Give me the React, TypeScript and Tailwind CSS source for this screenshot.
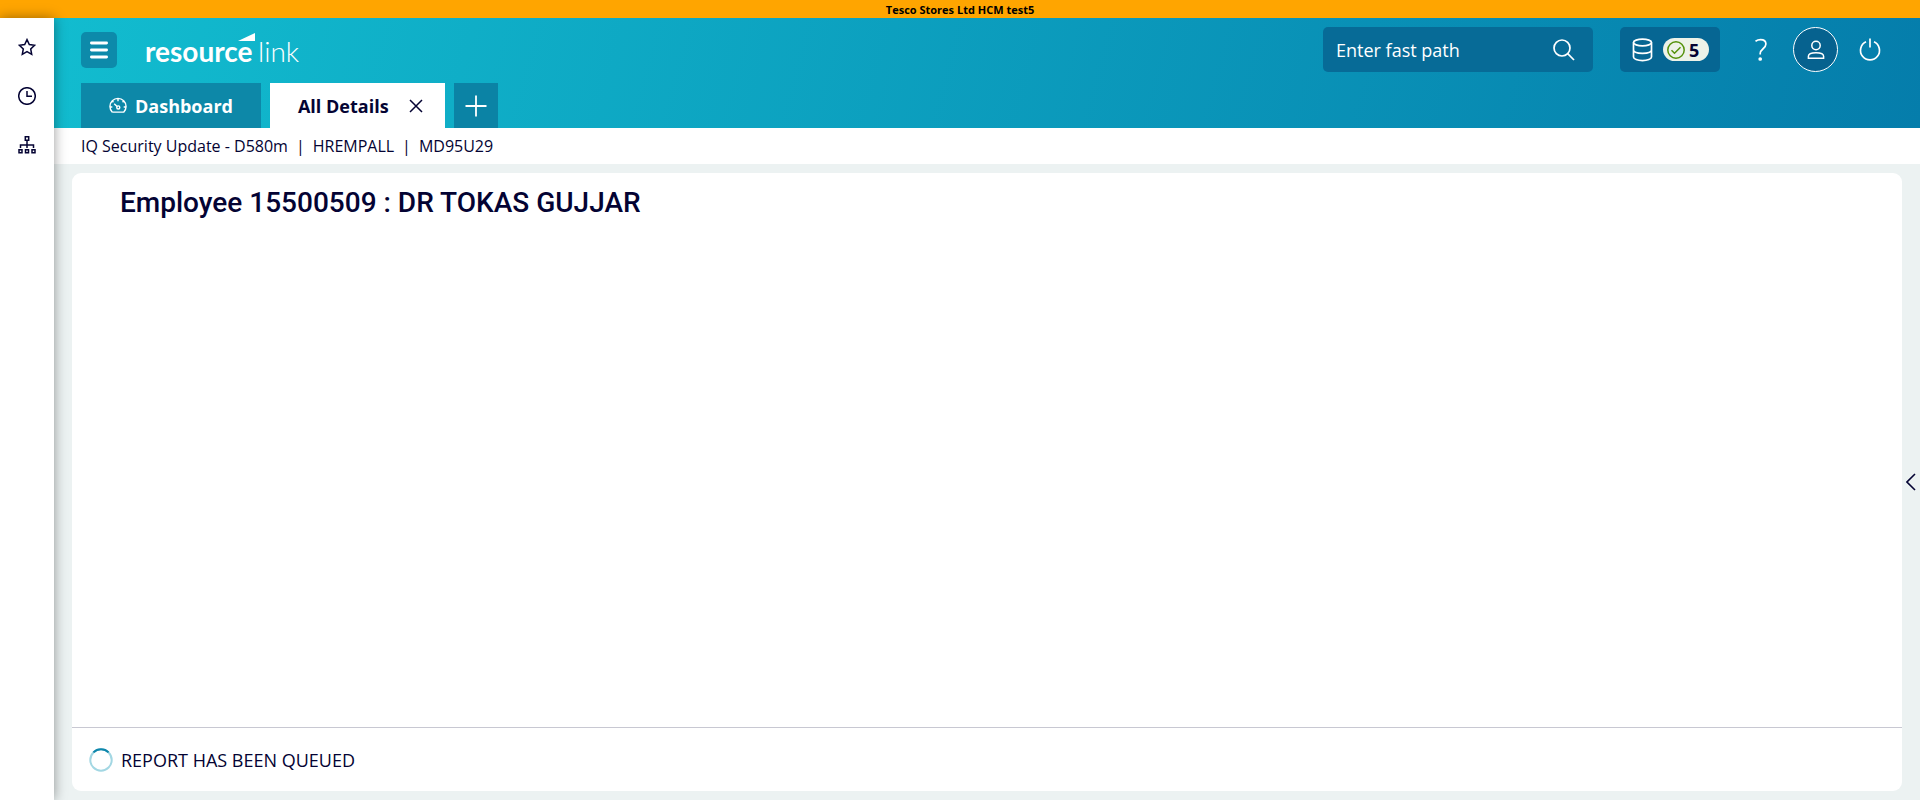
import { useState } from "react";

const shortcuts = [
  {
    label: "Favourites",
    icon: <path d="M9 1.6l2.3 4.9 5.3.7-3.9 3.7 1 5.4L9 13.7l-4.7 2.6 1-5.4L1.4 7.2l5.3-.7z" />,
  },
  {
    label: "Recent",
    icon: (
      <>
        <circle cx="9" cy="9" r="8.3" />
        <path d="M9 4v5.3h5" />
      </>
    ),
  },
  {
    label: "Organisation",
    icon: (
      <>
        <path d="M7.3.8h3.4v3.4H7.3zM1 13.7h3v3H1zM7.5 13.7h3v3h-3zM14 13.7h3v3h-3z" />
        <path d="M9 4.2v7.8M2.5 12V9h13v3" />
      </>
    ),
  },
];

function Sidebar() {
  return (
    <nav aria-label="Shortcuts" className="z-10 flex w-[54px] shrink-0 flex-col items-center gap-[31px] bg-white pt-5 shadow-[0_0_12px_rgba(0,0,0,0.4)]">
      {shortcuts.map((item) => (
        <a key={item.label} href="#" aria-label={item.label}>
          <svg width="18" height="18" viewBox="0 0 18 18" fill="none" stroke="currentColor" strokeWidth="1.5">
            {item.icon}
          </svg>
        </a>
      ))}
    </nav>
  );
}

function Logo() {
  return (
    <a href="#" aria-label="resourcelink" className="ml-7 text-white">
      <svg width="160" height="36" viewBox="0 0 160 36" fill="currentColor">
        <text x="0" y="30" className="font-['Lato',sans-serif] text-[28px] font-bold">resource</text>
        <text x="113" y="30" className="font-['Lato',sans-serif] text-[28px] font-light">link</text>
        <path d="M93 9L110 1v8z" />
      </svg>
    </a>
  );
}

function Header() {
  const [path, setPath] = useState("");
  return (
    <header className="flex h-[110px] flex-col justify-between bg-[linear-gradient(105deg,#12bccf,#057dab)] pr-[38px] pl-[27px] text-white">
      <div className="flex items-center pt-[9px]">
        <button aria-label="Menu" className="flex size-9 items-center justify-center rounded-[5px] bg-[#0d8aaa]">
          <svg width="18" height="18" viewBox="0 0 18 18" stroke="currentColor" strokeWidth="2.8" strokeLinecap="round">
            <path d="M1.4 2h15.2M1.4 9h15.2M1.4 16h15.2" />
          </svg>
        </button>
        <Logo />
        <div className="ml-auto flex h-[45px] w-[270px] items-center rounded-[5px] bg-[#076b97] px-[13px]">
          <input
            aria-label="Enter fast path"
            placeholder="Enter fast path"
            value={path}
            onChange={(e) => setPath(e.target.value)}
            className="min-w-0 flex-1 bg-transparent text-lg text-white outline-none placeholder:text-white placeholder:opacity-100"
          />
          <button aria-label="Search" className="mr-1">
            <svg width="24" height="24" viewBox="0 0 24 24" fill="none" stroke="currentColor" strokeWidth="1.7">
              <circle cx="10" cy="10" r="8" />
              <path d="M15.7 15.7l6.3 6.3" />
            </svg>
          </button>
        </div>
        <button aria-label="Queue status" className="ml-[27px] flex h-[45px] w-[100px] items-center gap-[10px] rounded-[5px] bg-[#066693] pl-3">
          <svg width="21" height="24" viewBox="0 0 21 24" fill="none" stroke="currentColor" strokeWidth="1.7">
            <ellipse cx="10.5" cy="4.5" rx="9" ry="3.3" />
            <path d="M1.5 4.5V19c0 2 4 3.6 9 3.6s9-1.6 9-3.6V4.5M1.5 12c0 2 4 3.3 9 3.3s9-1.3 9-3.3" />
          </svg>
          <span className="flex h-[23px] w-[46px] items-center gap-1 rounded-full bg-[#edf2e8] pl-1 text-lg font-bold text-[#040333]">
            <svg width="18" height="18" viewBox="0 0 18 18" fill="none" stroke="#55920b" strokeWidth="1.5">
              <circle cx="9" cy="9" r="8.2" />
              <path d="M4.5 9.2l3 3 6-6" />
            </svg>
            5
          </span>
        </button>
        <button aria-label="Help" className="ml-[32px] flex w-[18px] justify-center">
          <svg width="14" height="24" viewBox="0 0 14 24" fill="none" stroke="currentColor" strokeWidth="1.7">
            <path d="M1.5 3.2C3 2.2 4.7 1.6 6.5 1.6c3.3 0 5.4 1.6 5.4 4.4 0 4.8-5.7 4.7-5.7 9.6v1" />
            <circle cx="6.2" cy="21" r="1" fill="currentColor" />
          </svg>
        </button>
        <button aria-label="Account" className="ml-[23px] flex size-[45px] items-center justify-center rounded-full border border-white bg-[#06628f]">
          <svg width="18" height="20" viewBox="0 0 18 20" fill="none" stroke="currentColor" strokeWidth="1.5">
            <circle cx="9" cy="5.5" r="4.2" />
            <path d="M1.4 18.3v-2c0-2.3 2.7-3.6 7.6-3.6s7.6 1.3 7.6 3.6v2z" />
          </svg>
        </button>
        <button aria-label="Log out" className="ml-[20px]">
          <svg width="24" height="24" viewBox="0 0 24 24" fill="none" stroke="currentColor" strokeWidth="1.7">
            <path d="M8 3.8a9.5 9.5 0 1 0 8 0M12 .5v9" />
          </svg>
        </button>
      </div>
      <div className="flex h-[45px] gap-[9px] text-lg font-bold">
        <button className="flex items-center gap-2 bg-[#0d88a8] px-7">
          <svg width="18" height="18" viewBox="0 0 19 18" fill="none" stroke="currentColor" strokeWidth="1.5">
            <path d="M3.5 15.5h12M3.5 15.5A8.5 8.5 0 1 1 15.5 15.5M9.5 1v3M3.5 3.8l1.2 1.2M1 10h2.5M15.5 10H18M15.5 3.8l-1.2 1.2M5.5 6.5l3 3" />
            <circle cx="9.8" cy="10.5" r="1.6" />
          </svg>
          Dashboard
        </button>
        <div className="flex items-center gap-5 bg-white pr-[22px] pl-7 text-[#040333]">
          <button>All Details</button>
          <button aria-label="Close All Details">
            <svg width="14" height="14" viewBox="0 0 14 14" stroke="currentColor" strokeWidth="1.5">
              <path d="M1 1l12 12M13 1L1 13" />
            </svg>
          </button>
        </div>
        <button aria-label="New tab" className="flex w-11 items-center justify-center bg-[#0b83a5]">
          <svg width="22" height="22" viewBox="0 0 22 22" stroke="currentColor" strokeWidth="1.8">
            <path d="M11 .5v21M.5 11h21" />
          </svg>
        </button>
      </div>
    </header>
  );
}

export default function App() {
  return (
    <div className="flex min-h-screen flex-col bg-[#ecf2f2] font-['Open_Sans',sans-serif] text-[#040333]">
      <div className="h-[18px] bg-[#ffa500] text-center text-[11px] leading-5 font-bold text-black">
        Tesco Stores Ltd HCM test5
      </div>
      <div className="flex flex-1">
        <Sidebar />
        <div className="flex min-w-0 flex-1 flex-col">
          <Header />
          <div className="flex h-9 items-center gap-2 bg-white px-[27px] text-base">
            <span>IQ Security Update - D580m</span>
            <span>|</span>
            <span>HREMPALL</span>
            <span>|</span>
            <span>MD95U29</span>
          </div>
          <div className="flex flex-1 pt-[9px] pb-[9px] pl-[18px]">
            <main className="flex min-w-0 flex-1 flex-col rounded-[9px] bg-white">
              <h1 className="flex-1 px-12 pt-3 font-['Roboto',sans-serif] text-[28px] leading-9 font-medium">
                Employee 15500509 : DR TOKAS GUJJAR
              </h1>
              <div role="status" className="flex h-16 items-center gap-2 border-t border-[#c8c8d2] px-[17px] text-lg">
                <svg width="24" height="24" viewBox="0 0 24 24" fill="none" strokeWidth="2">
                  <circle cx="12" cy="12" r="10.7" stroke="#a3d7e3" />
                  <path d="M4.4 4.4a10.7 10.7 0 0 1 15.2 0" stroke="#0e86ab" />
                </svg>
                REPORT HAS BEEN QUEUED
              </div>
            </main>
            <button aria-label="Open side panel" className="flex w-[18px] items-center justify-center">
              <svg width="10" height="18" viewBox="0 0 10 18" fill="none" stroke="currentColor" strokeWidth="1.6">
                <path d="M9 1L1 9l8 8" />
              </svg>
            </button>
          </div>
        </div>
      </div>
    </div>
  );
}
